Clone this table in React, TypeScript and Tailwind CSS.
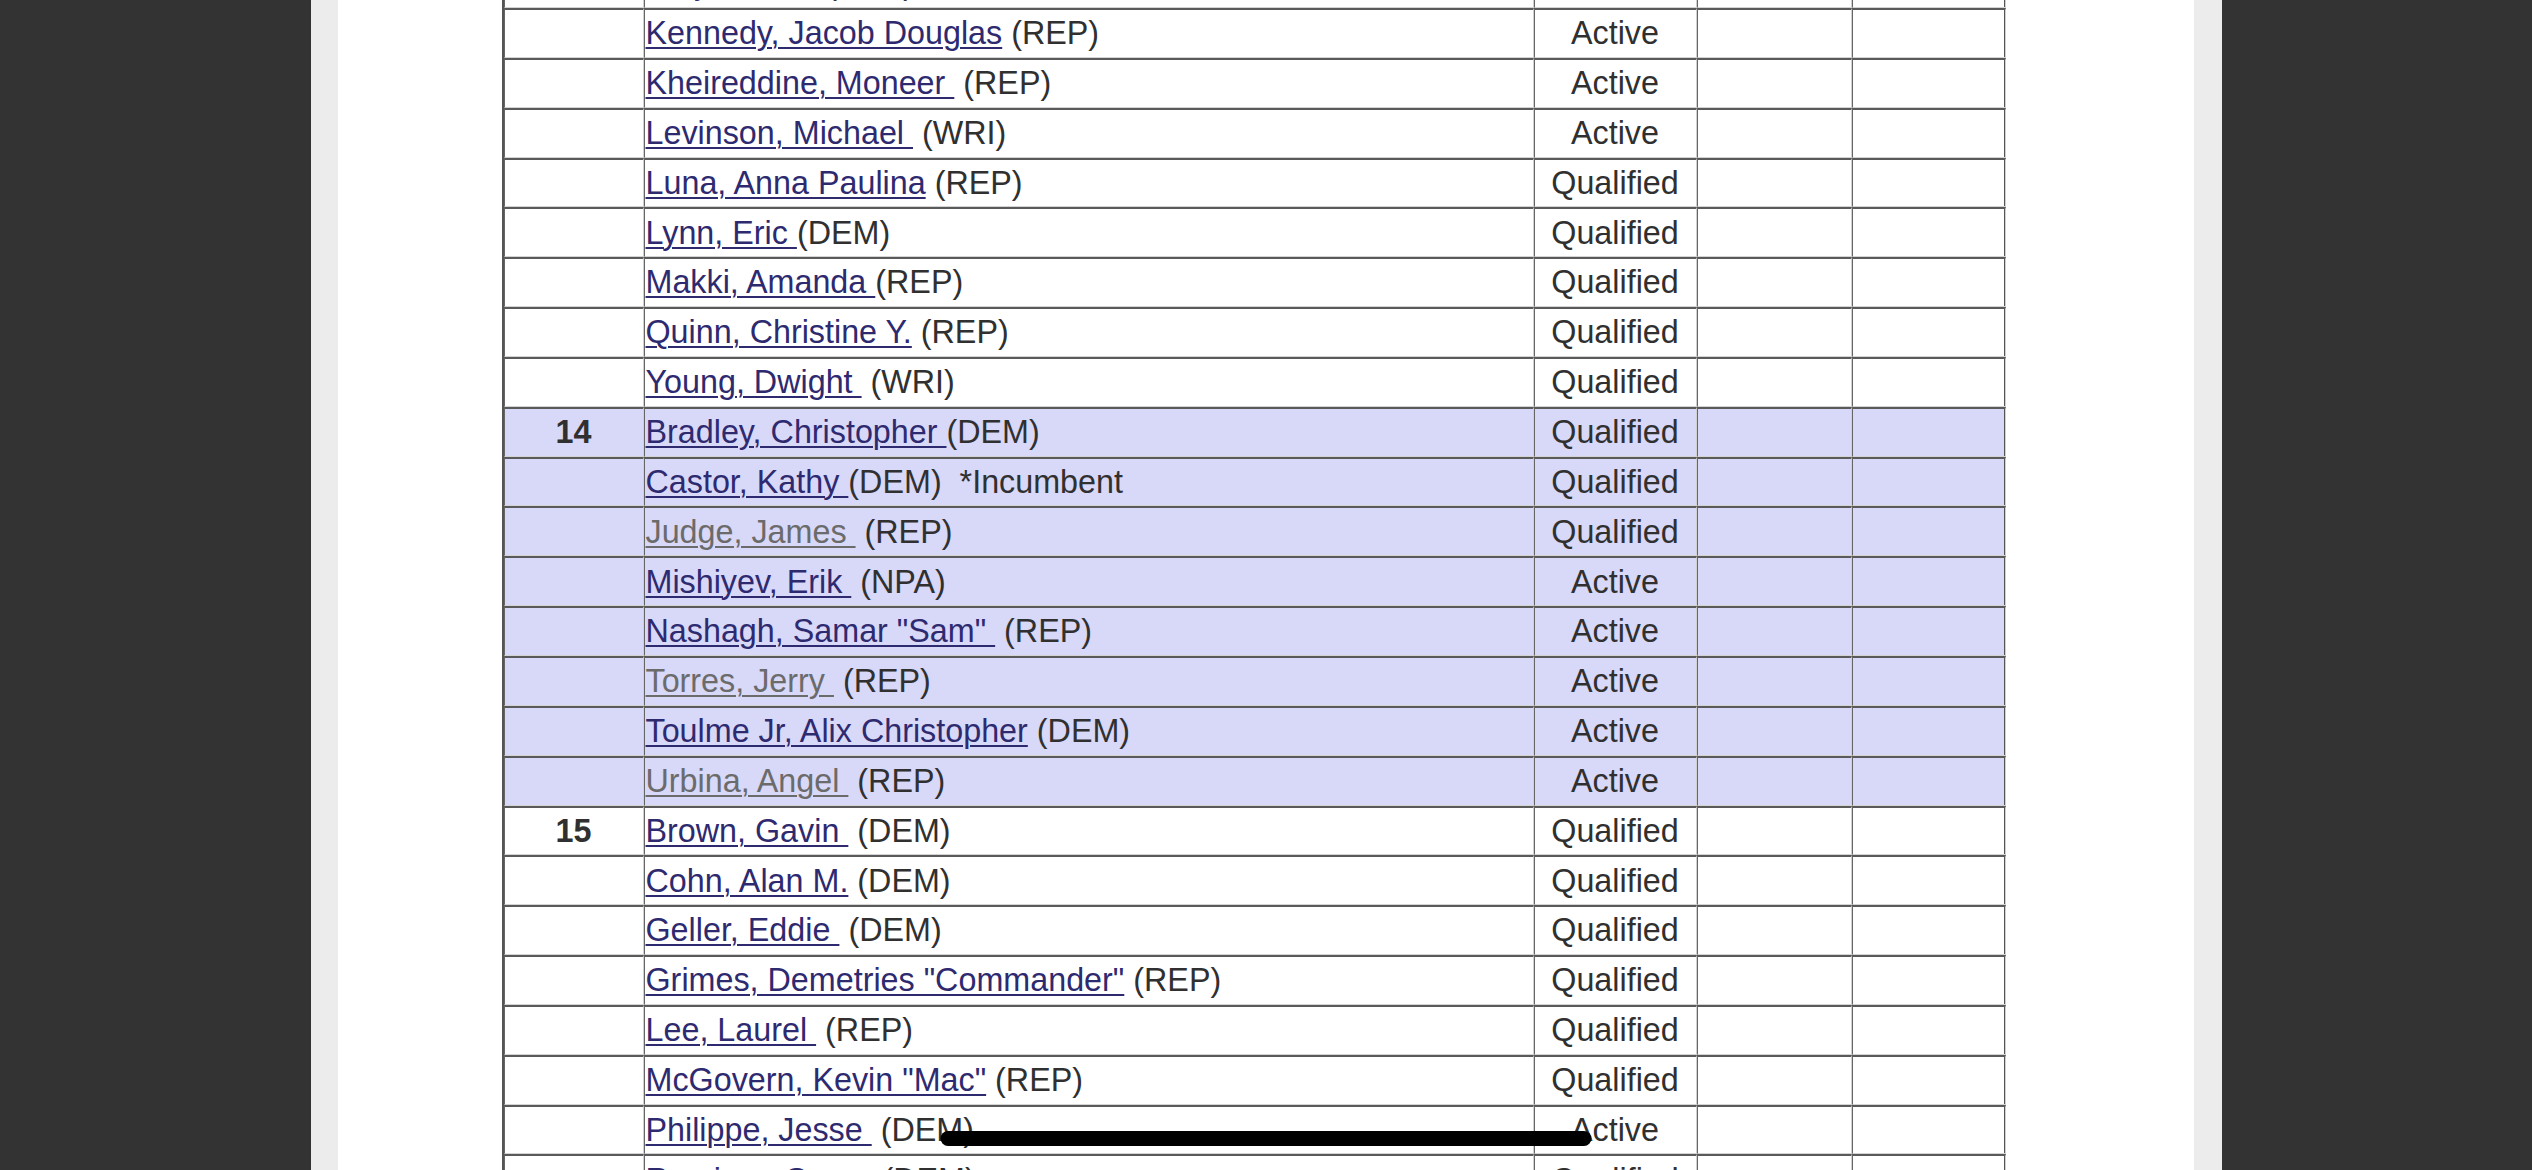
type Row = {
  dist?: string;
  name: string;
  gray?: boolean;
  rest: string;
  status: string;
  hl?: boolean;
};

const rows: Row[] = [
  { name: "Jolly, David ", rest: " (REP)", status: "Active" },
  { name: "Kennedy, Jacob Douglas", rest: " (REP)", status: "Active" },
  { name: "Kheireddine, Moneer ", rest: " (REP)", status: "Active" },
  { name: "Levinson, Michael ", rest: " (WRI)", status: "Active" },
  { name: "Luna, Anna Paulina", rest: " (REP)", status: "Qualified" },
  { name: "Lynn, Eric ", rest: "(DEM)", status: "Qualified" },
  { name: "Makki, Amanda ", rest: "(REP)", status: "Qualified" },
  { name: "Quinn, Christine Y.", rest: " (REP)", status: "Qualified" },
  { name: "Young, Dwight ", rest: " (WRI)", status: "Qualified" },
  { dist: "14", name: "Bradley, Christopher ", rest: "(DEM)", status: "Qualified", hl: true },
  { name: "Castor, Kathy ", rest: "(DEM)\u00a0 *Incumbent", status: "Qualified", hl: true },
  { name: "Judge, James ", gray: true, rest: " (REP)", status: "Qualified", hl: true },
  { name: "Mishiyev, Erik ", rest: " (NPA)", status: "Active", hl: true },
  { name: 'Nashagh, Samar "Sam" ', rest: " (REP)", status: "Active", hl: true },
  { name: "Torres, Jerry ", gray: true, rest: " (REP)", status: "Active", hl: true },
  { name: "Toulme Jr, Alix Christopher", rest: " (DEM)", status: "Active", hl: true },
  { name: "Urbina, Angel ", gray: true, rest: " (REP)", status: "Active", hl: true },
  { dist: "15", name: "Brown, Gavin ", rest: " (DEM)", status: "Qualified" },
  { name: "Cohn, Alan M.", rest: " (DEM)", status: "Qualified" },
  { name: "Geller, Eddie ", rest: " (DEM)", status: "Qualified" },
  { name: 'Grimes, Demetries "Commander"', rest: " (REP)", status: "Qualified" },
  { name: "Lee, Laurel ", rest: " (REP)", status: "Qualified" },
  { name: 'McGovern, Kevin "Mac"', rest: " (REP)", status: "Qualified" },
  { name: "Philippe, Jesse ", rest: " (DEM)", status: "Active" },
  { name: "Ramirez, Gerry ", rest: " (DEM)", status: "Qualified" },
];

const cell =
  "flex items-center border-t-2 border-b border-l border-r border-t-[#5a5a5a] border-b-[#d3d3d3] border-l-[#666] border-r-[#d0d0d0]";

export default function App() {
  return (
    <div
      className="relative h-[1170px] overflow-hidden bg-[#333333]"
      style={{ fontFamily: '"Liberation Sans", Arial, sans-serif' }}
    >
      <div className="mx-auto h-full w-[1911px] bg-[#ececec] pl-[27px] pr-[28px]">
        <div className="flow-root h-full overflow-hidden bg-white pl-[164px]">
          <div className="mt-[-41.85px] w-[1504px] border-x-2 border-x-[#555] text-[32.3px] leading-none text-[#303030]">
            {rows.map((r, i) => (
              <div
                key={i}
                className={`grid h-[49.85px] grid-cols-[140px_890px_163px_155px_154px] ${
                  r.hl ? "bg-[#d8d8f8]" : "bg-white"
                }`}
              >
                <div className={`${cell} justify-center font-bold`}>{r.dist}</div>
                <div className={`${cell} whitespace-pre pl-px`}>
                  <a
                    href="#"
                    className={`underline decoration-[1.5px] underline-offset-[3px] ${
                      r.gray ? "text-[#6b6b6b]" : "text-[#2e2a70]"
                    }`}
                  >
                    {r.name}
                  </a>
                  <span>{r.rest}</span>
                </div>
                <div className={`${cell} justify-center`}>{r.status}</div>
                <div className={cell} />
                <div className={cell} />
              </div>
            ))}
          </div>
        </div>
      </div>
      <div className="absolute bottom-[24px] left-1/2 h-[15px] w-[651px] -translate-x-1/2 rounded-full bg-black" />
    </div>
  );
}
